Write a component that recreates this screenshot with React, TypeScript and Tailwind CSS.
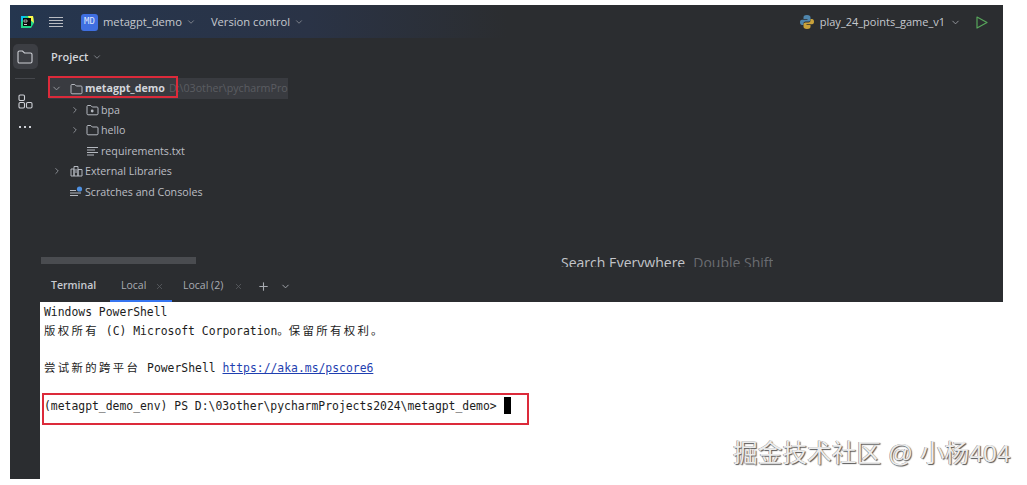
import React from 'react';
import { ChevronDown, ChevronRight, Plus, X } from 'lucide-react';

const mono = { fontFamily: '"DejaVu Sans Mono", "Noto Sans CJK SC", monospace' };

const FolderIcon = ({ dot }: { dot?: boolean }) => (
  <svg width="13" height="12" viewBox="0 0 13 12" fill="none" stroke="#b4b8bf" strokeWidth="1" className="shrink-0">
    <path d="M1 2.5 C1 1.7 1.5 1.5 2 1.5 H4.8 L6.3 3 H11 C11.6 3 12 3.4 12 4 V9.8 C12 10.4 11.6 10.8 11 10.8 H2 C1.4 10.8 1 10.4 1 9.8 Z" />
    {dot && <circle cx="6.2" cy="7" r="1.4" fill="#b4b8bf" stroke="none" />}
  </svg>
);

const TextFileIcon = () => (
  <svg width="13" height="12" viewBox="0 0 13 12" stroke="#b4b8bf" strokeWidth="1" className="shrink-0">
    <path d="M1 2.5 H12 M1 5 H9 M1 7.5 H12 M1 10 H8" />
  </svg>
);

const LibraryIcon = () => (
  <svg width="13" height="12" viewBox="0 0 13 12" fill="none" stroke="#b4b8bf" strokeWidth="1" className="shrink-0">
    <path d="M1 4 H4 V11 H1 Z M4 1.5 H8 V11 H4 Z M8 4.5 H12 V11 H8 Z M6 4 V8" />
  </svg>
);

const ScratchIcon = () => (
  <svg width="14" height="12" viewBox="0 0 14 12" stroke="#b4b8bf" strokeWidth="1" className="shrink-0">
    <path d="M1 4.5 H7 M1 7 H12 M1 9.5 H9" />
    <circle cx="10.5" cy="3" r="2.6" fill="#4d8fe0" stroke="none" />
  </svg>
);

const HamburgerIcon = () => (
  <svg width="14" height="13" viewBox="0 0 14 13" stroke="#b9bcc2" strokeWidth="1">
    <path d="M0 1.5 H14 M0 4.5 H14 M0 7.5 H14 M0 10.5 H14" />
  </svg>
);

const PyCharmLogo = () => (
  <svg width="14" height="14" viewBox="0 0 14 14">
    <path d="M1 1 H13 L14 8 L11 13 H1 Z" fill="#21d789" />
    <path d="M8 1 H13 L14 8 L9 4 Z" fill="#fcf84a" />
    <path d="M1 1 H6 L1 7 Z" fill="#07c3f2" />
    <rect x="3" y="3" width="8" height="8" fill="#0b0b0b" />
    <path d="M4 9.5 H7" stroke="#fff" strokeWidth="0.8" />
    <path d="M4 5 H7 V7 H4 Z" stroke="#ddd" strokeWidth="0.7" fill="none" />
  </svg>
);

const PythonIcon = () => (
  <svg width="16" height="16" viewBox="0 0 16 16">
    <path d="M8 1 C5 1 4.5 2 4.5 3.5 V5 H8.5 V5.8 H3 C1.5 5.8 1 7 1 8.3 C1 10 1.8 11 3 11 H4.5 V9.5 C4.5 8.3 5.3 7.6 6.5 7.6 H9.5 C10.7 7.6 11.5 6.8 11.5 5.7 V3.5 C11.5 2 10.5 1 8 1 Z" fill="#4f86ad" />
    <path d="M8 15 C11 15 11.5 14 11.5 12.5 V11 H7.5 V10.2 H13 C14.5 10.2 15 9 15 7.7 C15 6 14.2 5 13 5 H11.5 V6.5 C11.5 7.7 10.7 8.4 9.5 8.4 H6.5 C5.3 8.4 4.5 9.2 4.5 10.3 V12.5 C4.5 14 5.5 15 8 15 Z" fill="#c9a23a" />
  </svg>
);

const RailFolderIcon = () => (
  <svg width="16" height="14" viewBox="0 0 16 14" fill="none" stroke="#ced0d6" strokeWidth="1.1">
    <path d="M1 2.5 C1 1.6 1.6 1 2.5 1 H5.5 L7.5 3 H13.5 C14.4 3 15 3.6 15 4.5 V11.5 C15 12.4 14.4 13 13.5 13 H2.5 C1.6 13 1 12.4 1 11.5 Z" />
  </svg>
);

const StructureIcon = () => (
  <svg width="15" height="15" viewBox="0 0 15 15" fill="none" stroke="#ced0d6" strokeWidth="1.1">
    <rect x="1" y="1" width="5.5" height="5.5" rx="1.2" />
    <rect x="1" y="8.5" width="5.5" height="5.5" rx="1.2" />
    <rect x="8.5" y="8.5" width="5.5" height="5.5" rx="1.2" />
  </svg>
);

const RunIcon = () => (
  <svg width="12" height="13" viewBox="0 0 12 13" fill="none" stroke="#57a65b" strokeWidth="1.2">
    <path d="M1 1 L11 6.5 L1 12 Z" strokeLinejoin="round" />
  </svg>
);

const treeRows = [
  { label: 'bpa', pad: 'pl-[30px]', arrowGap: 'mr-[6px]', arrow: true, icon: <FolderIcon dot /> },
  { label: 'hello', pad: 'pl-[30px]', arrowGap: 'mr-[6px]', arrow: true, icon: <FolderIcon /> },
  { label: 'requirements.txt', pad: 'pl-[46px]', arrowGap: '', arrow: false, icon: <TextFileIcon /> },
  { label: 'External Libraries', pad: 'pl-[12px]', arrowGap: 'mr-[8px]', arrow: true, icon: <LibraryIcon /> },
  { label: 'Scratches and Consoles', pad: 'pl-[29px]', arrowGap: '', arrow: false, icon: <ScratchIcon /> },
];

export default function App() {
  return (
    <div className="relative w-[1027px] h-[485px] bg-white overflow-hidden pt-[5px] pl-[10px]" style={{ fontFamily: '"Open Sans", "Noto Sans", sans-serif' }}>
      <div className="w-[993px] h-[297px] bg-[#2b2d30] flex flex-col">
        {/* title bar */}
        <div className="h-[33px] pt-px flex items-center bg-gradient-to-r from-[#25364f] via-[#2a3346] via-30% to-[#2b2d30] to-50% text-[11.2px] text-[#c6c9cf]">
          <div className="w-[24px] flex justify-end"><PyCharmLogo /></div>
          <div className="ml-[15px]"><HamburgerIcon /></div>
          <div className="ml-[18px] w-[17px] h-[17px] rounded-[3px] bg-[#3f6fe0] text-[9px] text-[#dfe6fb] flex items-center justify-center" style={mono}>MD</div>
          <span className="ml-[5px]">metagpt_demo</span>
          <ChevronDown className="ml-[4px] w-[10px] h-[10px] text-[#8d9097]" />
          <span className="ml-[15px]">Version control</span>
          <ChevronDown className="ml-[4px] w-[10px] h-[10px] text-[#8d9097]" />
          <div className="ml-auto flex items-center text-[11px]">
            <PythonIcon />
            <span className="ml-[5px]">play_24_points_game_v1</span>
            <ChevronDown className="ml-[5px] w-[11px] h-[11px] text-[#9a9da3]" />
            <div className="ml-[15px] mr-[15px]"><RunIcon /></div>
          </div>
        </div>

        <div className="flex-1 flex min-h-0">
          {/* tool rail */}
          <div className="w-[30px] flex flex-col items-center pt-[6px]">
            <div className="w-[25px] h-[25px] rounded-[5px] bg-[#3c3e43] flex items-center justify-center"><RailFolderIcon /></div>
            <div className="w-[20px] h-px bg-[#45474c] mt-[9px]" />
            <div className="mt-[15px]"><StructureIcon /></div>
            <div className="mt-[17px] flex gap-[3px]">
              <i className="w-[2px] h-[2px] bg-[#ced0d6]" />
              <i className="w-[2px] h-[2px] bg-[#ced0d6]" />
              <i className="w-[2px] h-[2px] bg-[#ced0d6]" />
            </div>
          </div>

          {/* project panel */}
          <div className="flex-1 flex flex-col min-w-0">
            <div className="h-[38px] flex items-center pl-[11px] text-[11px] font-semibold text-[#d3d5da]">
              Project
              <ChevronDown className="ml-[4px] w-[10px] h-[10px] text-[#8d9097]" />
            </div>
            <div className="h-[21px] w-[239px] ml-[9px] mt-[2px] bg-[#393b40] flex items-center pl-[2px] text-[10.7px] overflow-hidden whitespace-nowrap">
              <ChevronDown className="w-[11px] h-[11px] text-[#9a9da3] shrink-0" />
              <div className="ml-[8px]"><FolderIcon /></div>
              <span className="ml-[2px] font-bold text-[#d3d5da]">metagpt_demo</span>
              <span className="ml-[4px] text-[#5b5d62]">D:\03other\pycharmPro</span>
            </div>
            <div className="mt-[0.5px] text-[10.7px] text-[#bcbec4]">
              {treeRows.map((row) => (
                <div key={row.label} className={`h-[20.5px] flex items-center ${row.pad}`}>
                  {row.arrow && <ChevronRight className={`w-[10px] h-[10px] text-[#9a9da3] shrink-0 ${row.arrowGap}`} />}
                  {row.icon}
                  <span className="ml-[2px]">{row.label}</span>
                </div>
              ))}
            </div>

            <div className="flex-1 relative">
              <div className="absolute left-[1px] bottom-[6px] w-[155px] h-[7px] bg-[#4a4c50]" />
              <div className="absolute left-[521px] bottom-[3px] h-[12px] overflow-hidden text-[14px] leading-[16px] whitespace-nowrap">
                <span className="text-[#c3c5ca]">Search Everywhere</span>
                <span className="ml-[8px] text-[#6a6c71]">Double Shift</span>
              </div>
            </div>

            {/* terminal tabs */}
            <div className="h-[32px] flex items-stretch text-[10.5px]">
              <div className="pl-[11px] w-[70px] flex items-center font-semibold text-[#c8cad0]">Terminal</div>
              <div className="w-[62px] flex items-center pl-[11px] pt-[2px] border-b-2 border-[#3574f0] text-[#a9acb2]">
                Local
                <X className="ml-[9px] w-[9px] h-[9px] text-[#5f6166]" />
              </div>
              <div className="flex items-center pl-[11px] text-[#a9acb2]">
                Local (2)
                <X className="ml-[11px] w-[9px] h-[9px] text-[#5f6166]" />
                <Plus className="ml-[14px] w-[13px] h-[13px] text-[#a9acb2]" />
                <ChevronDown className="ml-[10px] w-[11px] h-[11px] text-[#a9acb2]" />
              </div>
            </div>
          </div>
        </div>
      </div>

      <div className="flex h-[177px] w-[1017px]">
        <div className="w-[30px] bg-[#2b2d30] shrink-0" />
        <div className="pl-[4px] pt-[1px] text-[11.4px] leading-[18.7px] text-[#1c1c1c] whitespace-pre" style={mono}>
          <div>Windows PowerShell</div>
          <div><span className="tracking-[2.35px]">版权所有</span> (C) Microsoft Corporation。<span className="tracking-[2.35px]">保留所有权利。</span></div>
          <div>&nbsp;</div>
          <div><span className="tracking-[2.35px]">尝试新的跨平台</span> PowerShell <span className="text-[#1f3fb0] underline">https://aka.ms/pscore6</span></div>
          <div>&nbsp;</div>
          <div className="flex items-center">
            (metagpt_demo_env) PS D:\03other\pycharmProjects2024\metagpt_demo&gt;
            <span className="ml-[7px] w-[7px] h-[17px] bg-black" />
          </div>
        </div>
      </div>

      {/* screenshot annotations */}
      <div className="absolute left-[48px] top-[76px] w-[130px] h-[22px] border-2 border-[#dc2a3a]" />
      <div className="absolute left-[42px] top-[393px] w-[487px] h-[32px] border-2 border-[#dc2a3a]" />
      <div
        className="absolute left-[733px] top-[439px] text-[24.7px] leading-[30px] text-[#ececec] whitespace-nowrap [text-shadow:1px_1px_1px_#555,-0.5px_-0.5px_0_#888]"
        style={{ fontFamily: '"Liberation Sans", "Noto Sans CJK SC", sans-serif' }}
      >
        掘金技术社区 @ 小杨404
      </div>
    </div>
  );
}
